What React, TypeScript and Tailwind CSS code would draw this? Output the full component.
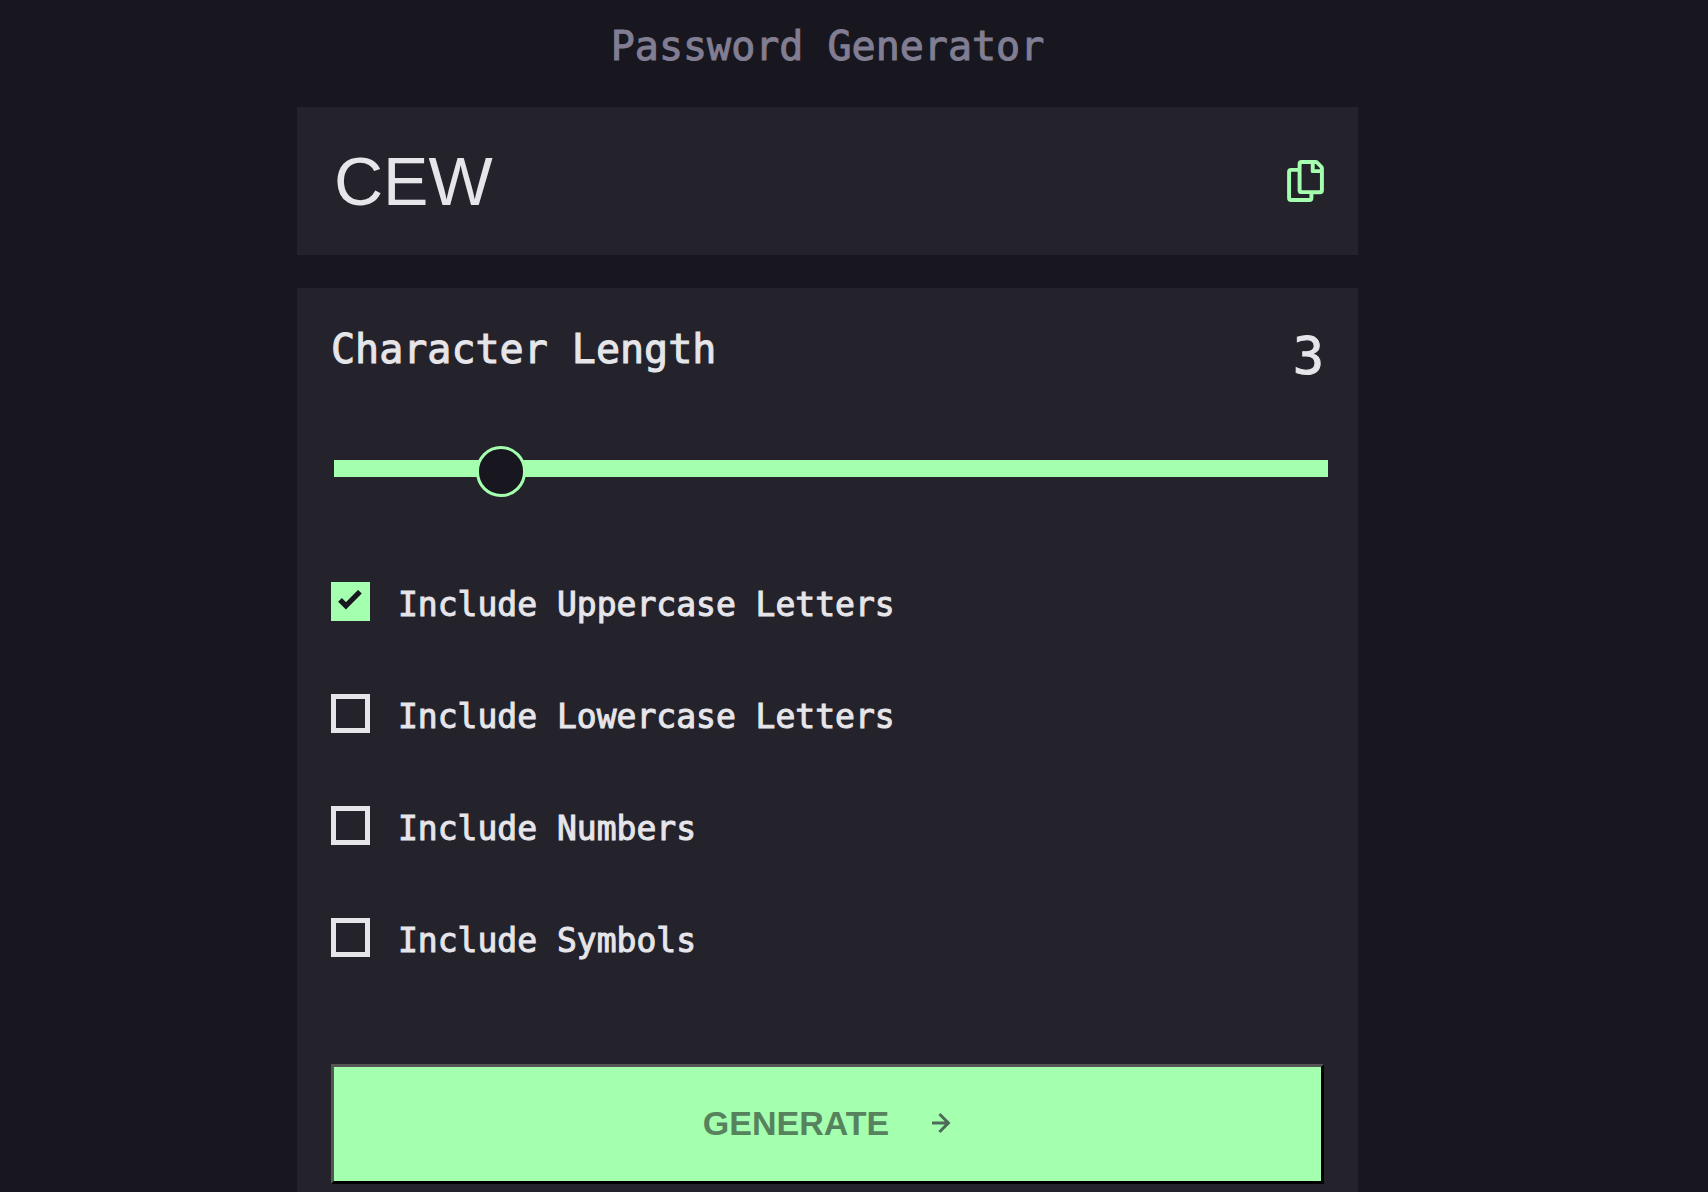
import { useState } from "react";

const OPTIONS = [
  { id: "uppercase", label: "Include Uppercase Letters", chars: "ABCDEFGHIJKLMNOPQRSTUVWXYZ" },
  { id: "lowercase", label: "Include Lowercase Letters", chars: "abcdefghijklmnopqrstuvwxyz" },
  { id: "numbers", label: "Include Numbers", chars: "0123456789" },
  { id: "symbols", label: "Include Symbols", chars: "!@#$%^&*()_+-=?" },
];

function CopyIcon() {
  return (
    <svg className="h-[42px] w-[37px]" viewBox="0 0 21 24" fill="currentColor" aria-hidden="true">
      <path d="M20.341 3.091 17.909.659A2.25 2.25 0 0 0 16.319 0H8.25A2.25 2.25 0 0 0 6 2.25V4.5H2.25A2.25 2.25 0 0 0 0 6.75v15A2.25 2.25 0 0 0 2.25 24h10.5A2.25 2.25 0 0 0 15 21.75V19.5h3.75A2.25 2.25 0 0 0 21 17.25V4.682a2.25 2.25 0 0 0-.659-1.591ZM12.469 21.75H2.53a.281.281 0 0 1-.281-.281V7.03a.281.281 0 0 1 .281-.281H6v10.5a2.25 2.25 0 0 0 2.25 2.25h4.5v1.969a.282.282 0 0 1-.281.281Zm6-4.5H8.53a.281.281 0 0 1-.281-.281V2.53a.281.281 0 0 1 .281-.281H13.5v4.125c0 .621.504 1.125 1.125 1.125h4.125v9.469a.282.282 0 0 1-.281.281Zm.281-12h-3v-3h.451c.075 0 .147.03.2.082L18.667 4.6a.283.283 0 0 1 .083.199v.451Z" />
    </svg>
  );
}

function CheckIcon() {
  return (
    <svg
      className="pointer-events-none invisible absolute top-2 left-[7px] h-[21px] w-[25px] peer-checked:visible"
      viewBox="0 0 14 12"
      fill="none"
      aria-hidden="true"
    >
      <path stroke="#18171F" strokeWidth="3" d="M1 5.607 4.393 9l8-8" />
    </svg>
  );
}

function ArrowIcon() {
  return (
    <svg className="size-5" viewBox="0 0 12 12" fill="currentColor" aria-hidden="true">
      <path d="m5.106 12 6-6-6-6-1.265 1.265 3.841 3.84H.001v1.79h7.681l-3.841 3.84z" />
    </svg>
  );
}

export default function App() {
  const [password, setPassword] = useState("CEW");
  const [length, setLength] = useState(3);
  const [selected, setSelected] = useState<string[]>(["uppercase"]);

  const toggle = (id: string) =>
    setSelected((s) => (s.includes(id) ? s.filter((x) => x !== id) : [...s, id]));

  const generate = () => {
    const pool = OPTIONS.filter((o) => selected.includes(o.id)).map((o) => o.chars).join("");
    if (!pool) return;
    setPassword(
      Array.from({ length }, () => pool[Math.floor(Math.random() * pool.length)]).join("")
    );
  };

  return (
    <div className="min-h-screen bg-[#18171f] pt-5 pr-[53px] font-['DejaVu_Sans_Mono',monospace] text-[#e6e5ea]">
      <main className="mx-auto flex w-full max-w-[1061px] flex-col">
        <h1 className="text-center text-[40px] leading-[52px] text-[#817d92] [-webkit-text-stroke:1px]">
          Password Generator
        </h1>

        <section className="mt-[35px] flex h-[148px] items-center justify-between gap-6 bg-[#24232c] px-[34px]">
          <input
            type="text"
            readOnly
            aria-label="Generated password"
            value={password}
            className="min-w-0 flex-1 bg-transparent pl-[3px] font-['Liberation_Sans',sans-serif] text-[68px] leading-[80px] outline-none"
          />
          <button
            type="button"
            aria-label="Copy password"
            className="text-[#a4ffaf]"
            onClick={() => navigator.clipboard?.writeText(password)}
          >
            <CopyIcon />
          </button>
        </section>

        <section className="mt-[33px] flex flex-col bg-[#24232c] p-[34px]">
          <div className="flex items-start justify-between [-webkit-text-stroke:1px]">
            <label htmlFor="length" className="text-[40px] leading-[54px]">
              Character Length
            </label>
            <output htmlFor="length" className="text-[52px] leading-[68px]">
              {length}
            </output>
          </div>

          <input
            id="length"
            type="range"
            min={0}
            max={20}
            value={length}
            onChange={(e) => setLength(Number(e.target.value))}
            className="mt-[70px] -mr-1 ml-[3px] h-[17px] appearance-none bg-[#a4ffaf] outline-none [&::-webkit-slider-thumb]:mt-1.5 [&::-webkit-slider-thumb]:h-[51px] [&::-webkit-slider-thumb]:w-[50px] [&::-webkit-slider-thumb]:appearance-none [&::-webkit-slider-thumb]:rounded-full [&::-webkit-slider-thumb]:border-3 [&::-webkit-slider-thumb]:border-[#a4ffaf] [&::-webkit-slider-thumb]:bg-[#18171f]"
          />

          <div className="mt-[105px] flex flex-col gap-[67px]">
            {OPTIONS.map((o) => (
              <div key={o.id} className="flex items-start gap-7">
                <span className="relative flex">
                  <input
                    id={o.id}
                    type="checkbox"
                    checked={selected.includes(o.id)}
                    onChange={() => toggle(o.id)}
                    className="peer size-[39px] appearance-none border-5 border-[#e6e5ea] checked:border-[#a4ffaf] checked:bg-[#a4ffaf]"
                  />
                  <CheckIcon />
                </span>
                <label
                  htmlFor={o.id}
                  className="text-[33px] leading-[45px] [-webkit-text-stroke:1px]"
                >
                  {o.label}
                </label>
              </div>
            ))}
          </div>

          <button
            type="button"
            onClick={generate}
            className="mt-[101px] flex h-[120px] items-center justify-center gap-[43px] border-3 border-t-[#555555] border-r-black border-b-black border-l-[#555555] bg-[#a4ffaf] pb-0.5 font-['Liberation_Sans',sans-serif] text-[34px] font-bold text-[#56835d]"
          >
            GENERATE
            <span className="text-[#4e6a58]">
              <ArrowIcon />
            </span>
          </button>
        </section>
      </main>
    </div>
  );
}
